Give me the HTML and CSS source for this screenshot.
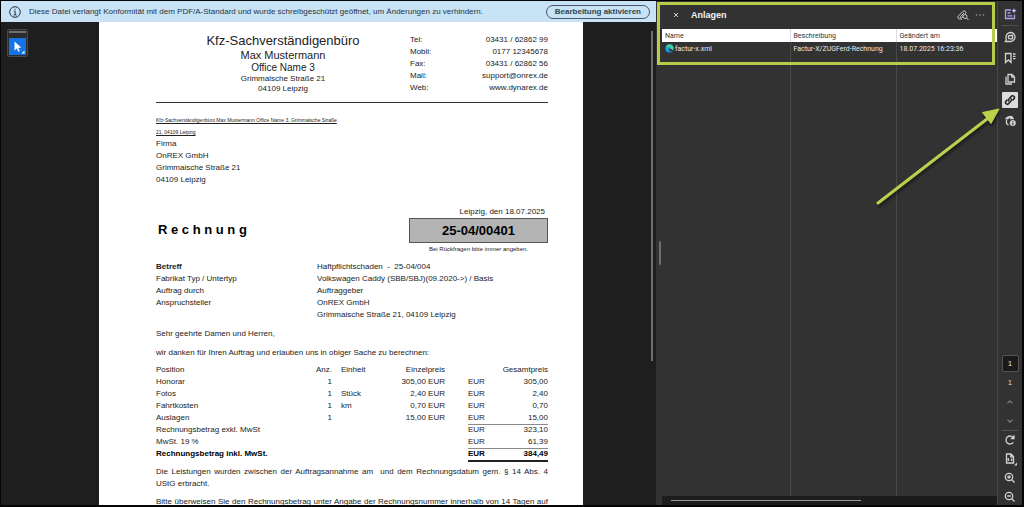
FILE: index.html
```html
<!DOCTYPE html>
<html lang="de">
<head>
    <meta charset="UTF-8">
    <meta name="viewport" content="width=device-width, initial-scale=1.0">
    <title>Rechnung 25-04/00401</title>
    <link rel="stylesheet" href="styles.css">
</head>
<body>

    <div class="app">
        <main class="viewer">
            <div class="banner">
                <svg class="info-icon" viewBox="0 0 12 12"><circle cx="6" cy="6" r="5.3"/><path d="M4.8 5.2h1.4v3.6M4.6 8.9h3M6 2.8v1.1"/></svg>
                <p>Diese Datei verlangt Konformität mit dem PDF/A-Standard und wurde schreibgeschützt geöffnet, um Änderungen zu verhindern.</p>
                <button class="enable-btn">Bearbeitung aktivieren</button>
            </div>

            <div class="document">
                <div class="tools">
                    <div class="palette">
                        <button class="tool-btn" aria-label="Auswählen">
                            <svg viewBox="0 0 17 17"><path d="M5.5 3.5v9l2.3-2 1.5 3.2 1.5-.7-1.5-3.1 2.9-.3z"/><path d="M15.5 12.5v3h-3z"/></svg>
                        </button>
                    </div>
                </div>

                <div class="stage">
                    <article class="page">
                        <header class="letterhead">
                            <div class="company">
                                <h1>Kfz-Sachverständigenbüro</h1>
                                <p class="owner">Max Mustermann</p>
                                <p class="office">Office Name 3</p>
                                <p class="street">Grimmaische Straße 21</p>
                                <p class="street">04109 Leipzig</p>
                            </div>
                            <dl class="contact">
                                <dt>Tel:</dt><dd>03431 / 62862 99</dd>
                                <dt>Mobil:</dt><dd>0177 12345678</dd>
                                <dt>Fax:</dt><dd>03431 / 62862 56</dd>
                                <dt>Mail:</dt><dd>support@onrex.de</dd>
                                <dt>Web:</dt><dd>www.dynarex.de</dd>
                            </dl>
                        </header>

                        <p class="sender">Kfz-Sachverständigenbüro Max Mustermann Office Name 3, Grimmaische Straße<br>21, 04109 Leipzig</p>
                        <address>Firma<br>OnREX GmbH<br>Grimmaische Straße 21<br>04109 Leipzig</address>

                        <section class="title-row">
                            <h2>R e c h n u n g</h2>
                            <div class="number-block">
                                <p class="date">Leipzig, den 18.07.2025</p>
                                <p class="number">25-04/00401</p>
                                <p class="hint">Bei Rückfragen bitte immer angeben.</p>
                            </div>
                        </section>

                        <dl class="subject">
                            <dt><b>Betreff</b></dt><dd>Haftpflichtschaden &nbsp;-&nbsp; 25-04/004</dd>
                            <dt>Fabrikat Typ / Untertyp</dt><dd>Volkswagen Caddy (SBB/SBJ)(09.2020-&gt;) / Basis</dd>
                            <dt>Auftrag durch</dt><dd>Auftraggeber</dd>
                            <dt>Anspruchsteller</dt><dd>OnREX GmbH<br>Grimmaische Straße 21, 04109 Leipzig</dd>
                        </dl>

                        <p class="text">Sehr geehrte Damen und Herren,</p>
                        <p class="text">wir danken für Ihren Auftrag und erlauben uns in obiger Sache zu berechnen:</p>

                        <table class="items">
                            <thead>
                                <tr><th class="col-pos">Position</th><th class="col-qty">Anz.</th><th class="col-unit">Einheit</th><th class="col-price">Einzelpreis</th><th class="col-gap"></th><th class="col-cur"></th><th class="col-total">Gesamtpreis</th></tr>
                            </thead>
                            <tbody>
                                <tr><td>Honorar</td><td class="num">1</td><td class="unit"></td><td class="num">305,00 EUR</td><td></td><td>EUR</td><td class="num">305,00</td></tr>
                                <tr><td>Fotos</td><td class="num">1</td><td class="unit">Stück</td><td class="num">2,40 EUR</td><td></td><td>EUR</td><td class="num">2,40</td></tr>
                                <tr><td>Fahrtkosten</td><td class="num">1</td><td class="unit">km</td><td class="num">0,70 EUR</td><td></td><td>EUR</td><td class="num">0,70</td></tr>
                                <tr><td>Auslagen</td><td class="num">1</td><td class="unit"></td><td class="num">15,00 EUR</td><td></td><td>EUR</td><td class="num">15,00</td></tr>
                            </tbody>
                            <tfoot>
                                <tr><td colspan="5">Rechnungsbetrag exkl. MwSt</td><td class="line">EUR</td><td class="num line">323,10</td></tr>
                                <tr><td colspan="5">MwSt. 19 %</td><td>EUR</td><td class="num">61,39</td></tr>
                                <tr class="sum"><td colspan="5">Rechnungsbetrag inkl. MwSt.</td><td class="line total">EUR</td><td class="num line total">384,49</td></tr>
                            </tfoot>
                        </table>

                        <p class="text justified">Die Leistungen wurden zwischen der Auftragsannahme am &nbsp;und dem Rechnungsdatum gem. § 14 Abs. 4 UStG erbracht.</p>
                        <p class="text full-line">Bitte überweisen Sie den Rechnungsbetrag unter Angabe der Rechnungsnummer innerhalb von 14 Tagen auf</p>
                    </article>
                    <div class="scroll-thumb"></div>
                </div>
            </div>
        </main>

        <aside class="panel">
            <div class="panel-head">
                <button class="icon-btn" aria-label="Schließen"><svg viewBox="0 0 12 12"><path d="M4 4l4 4M8 4l-4 4"/></svg></button>
                <h2>Anlagen</h2>
                <button class="icon-btn" aria-label="Anlagen durchsuchen"><svg viewBox="0 0 12 12"><path d="M5 10H2.800a1.800 1.800 0 0 1-1.200-3.200L5.800 2.500a1.700 1.700 0 0 1 2.600 2.200M7 4L3.500 7.600a.8.8 0 0 0 1.200 1.100L6 7.500"/><circle cx="8" cy="7.500" r="2"/><path d="M9.500 9l2 2"/></svg></button>
                <button class="icon-btn more" aria-label="Optionen"><svg viewBox="0 0 12 12"><circle cx="2.500" cy="6" r=".8"/><circle cx="6" cy="6" r=".8"/><circle cx="9.500" cy="6" r=".8"/></svg></button>
            </div>
            <div class="list">
                <table class="files">
                    <thead>
                        <tr><th class="col-name">Name</th><th class="col-desc">Beschreibung</th><th>Geändert am</th></tr>
                    </thead>
                    <tbody>
                        <tr>
                            <td class="file">
                                <svg class="edge" viewBox="0 0 10 10"><circle cx="5" cy="5" r="4.600" fill="#1379c9"/><path d="M.6 4.200C1 1.800 2.800.4 5 .4c2.700 0 4.600 2 4.600 4.200C9.600 6.200 8.400 7 7 7 5.800 7 5.900 6.200 6 5.500 6 3.800 3.500 2.400.6 4.200z" fill="#44d39c"/><path d="M.6 4.200C2 2.300 5 2.600 6 4.800 4 3.600 2.600 6 4.600 9.500 2 9.400.3 7 .6 4.200z" fill="#1aa5d8"/><path d="M6 5c-1.500.6-1 2.300.3 2.700 1 .3 2 0 2.600-.5" fill="#323232"/></svg>factur-x.xml
                            </td>
                            <td>Factur-X/ZUGFerd-Rechnung</td>
                            <td>18.07.2025 16:23:36</td>
                        </tr>
                        <tr class="rest"><td></td><td></td><td></td></tr>
                    </tbody>
                </table>
                <div class="hscroll"><div class="hthumb"></div></div>
            </div>
            <div class="splitter"></div>
            <div class="highlight"></div>
        </aside>

        <nav class="rail">
            <button class="rail-btn assistant" aria-label="KI-Assistent"><svg viewBox="0 0 16 16"><path d="M9 4H3.500v8.500h9V8.500M5.500 7h3M5.500 9.800h5"/><path d="M12 2l.8 2 2 .8-2 .8-.8 2-.8-2-2-.8 2-.8z" class="solid"/></svg></button>
            <hr>
            <button class="rail-btn" aria-label="Kommentare"><svg viewBox="0 0 16 16"><path d="M3.500 12.500h5a4.500 4.500 0 1 0-4.500-4.300c0 1.700.8 2.600-.5 4.300z"/><path d="M10.500 6.500H8a1.700 1.700 0 0 0 0 3.400h2.500z"/></svg></button>
            <button class="rail-btn" aria-label="Lesezeichen"><svg viewBox="0 0 16 16"><path d="M3.500 3.500H9v9L6.300 10l-2.800 2.500zM11 4h2.500M11 6.300h2.500M11 8.600h2.500"/></svg></button>
            <button class="rail-btn" aria-label="Seiten"><svg viewBox="0 0 16 16"><path d="M6 3.500h4l2.500 2.500v5H6zM9.800 3.700v2.500h2.500M4 5.500v7.500h6"/></svg></button>
            <button class="rail-btn active" aria-label="Anlagen"><svg viewBox="0 0 16 16"><path d="M7 9.500a2 2 0 0 1 0-2.500l2.200-2.600a1.800 1.800 0 0 1 2.800 2.400l-1.500 1.700M9 6.500A2 2 0 0 1 9 9l-2.200 2.600A1.800 1.800 0 0 1 4 9.200l1.500-1.700"/></svg></button>
            <button class="rail-btn" aria-label="Konformität"><svg viewBox="0 0 16 16"><path d="M3 6.200a5 4 0 0 1 8-2.500l1 2.500H8V4.500L6 6.500z" class="solid"/><path d="M4.500 7v3.500l2 1.800"/><circle cx="10.800" cy="10" r="3" class="solid"/><path d="M10.800 8.300v.8M10.800 9.700v2" class="cut"/></svg></button>

            <div class="rail-bottom">
                <input class="page-input" type="text" value="1" aria-label="Seite">
                <span class="page-count">1</span>
                <button class="rail-btn dim" aria-label="Vorherige Seite"><svg viewBox="0 0 16 16"><path d="M5.500 9.300L8 7l2.500 2.300"/></svg></button>
                <button class="rail-btn dim" aria-label="Nächste Seite"><svg viewBox="0 0 16 16"><path d="M5.500 6.700L8 9l2.500-2.300"/></svg></button>
                <hr>
                <button class="rail-btn" aria-label="Drehen"><svg viewBox="0 0 16 16"><path d="M11.300 10.300a4 4 0 1 1 0-4.600M12 3.200v3.300H8.800"/></svg></button>
                <button class="rail-btn" aria-label="Seitenansicht"><svg viewBox="0 0 16 16"><path d="M4.500 3h4.500l2.500 2.500V12h-7zM8.800 3v2.800h2.700M6.300 7v3M9.700 7.500V10M8 8v.2M8 9.600v.2"/><path d="M15 11.500v3h-3z" class="solid"/></svg></button>
                <button class="rail-btn" aria-label="Vergrößern"><svg viewBox="0 0 16 16"><circle cx="7" cy="7" r="3.700"/><path d="M9.800 9.800l2.700 2.700M5.200 7h3.600M7 5.200v3.600"/></svg></button>
                <button class="rail-btn" aria-label="Verkleinern"><svg viewBox="0 0 16 16"><circle cx="7" cy="7" r="3.700"/><path d="M9.800 9.800l2.700 2.700M5.200 7h3.600"/></svg></button>
            </div>
        </nav>

        <svg class="arrow" viewBox="0 0 126 100"><path d="M3 97L112 13" stroke="#bdd04c" stroke-width="3" stroke-linecap="round"/><path d="M124 3l-8 14.500-8.500-11z" fill="#bdd04c" stroke="#bdd04c" stroke-width="1"/></svg>
    </div>

</body>
</html>
```
FILE: styles.css
```css
* {
    margin: 0;
    padding: 0;
    box-sizing: border-box;
}

body {
    font-family: "Liberation Sans", Arial, sans-serif;
    font-size: 8px;
    line-height: 12px;
    color: #222;
    background-color: #000;
}

button {
    border: none;
    background: none;
    font-family: inherit;
    cursor: pointer;
}

svg {
    display: block;
    fill: none;
}

.app {
    position: relative;
    display: flex;
    height: 100vh;
    border: solid #050505;
    border-width: 1px 2px 2px 1px;
    overflow: hidden;
}

/* Dokumentansicht */
.viewer {
    flex: 1;
    min-width: 0;
    display: flex;
    flex-direction: column;
    background-color: #1e1e1e;
}

.banner {
    flex: none;
    display: flex;
    align-items: center;
    height: 21px;
    padding: 0 6px 0 8px;
    gap: 8px;
    background-color: #c8e2f6;
    color: #27343f;
}

.info-icon {
    width: 12px;
    height: 12px;
    stroke: #27343f;
}

.banner p {
    flex: 1;
    white-space: nowrap;
}

.enable-btn {
    height: 14px;
    padding: 0 8px;
    border: 1px solid #44586a;
    border-radius: 7px;
    color: #33424f;
    font-size: 8px;
    font-weight: bold;
    line-height: 12px;
}

.document {
    flex: 1;
    min-height: 0;
    display: flex;
}

.tools {
    width: 25px;
    padding: 7px 0 0 6px;
}

.palette {
    width: 21px;
    padding: 8px 1px 1px;
    border: 1px solid #484848;
    border-radius: 2px;
    background: linear-gradient(#707070, #707070) 50% 1px / 17px 2px no-repeat #2c2c2c;
}

.tool-btn {
    display: block;
    width: 17px;
    height: 17px;
    background-color: #1473e6;
}

.tool-btn path {
    fill: #fff;
}

.stage {
    position: relative;
    flex: 1;
    display: flex;
    justify-content: center;
    overflow: hidden;
}

.scroll-thumb {
    position: absolute;
    top: 9px;
    right: 3px;
    width: 2px;
    height: 330px;
    background-color: #6e6e6e;
}

/* Rechnung */
.page {
    width: 484px;
    min-height: 100%;
    padding: 11px 35px 0 57px;
    background-color: #fff;
}

.letterhead {
    display: flex;
    justify-content: space-between;
    height: 70px;
    border-bottom: 1px solid #333;
}

.company {
    width: 254px;
    text-align: center;
}

.company h1 {
    font-size: 13px;
    font-weight: normal;
    line-height: 16px;
}

.owner {
    font-size: 11px;
    line-height: 13px;
}

.office {
    font-size: 10px;
    line-height: 12px;
}

.street {
    line-height: 10px;
}

.contact {
    display: grid;
    grid-template-columns: auto auto;
    justify-content: space-between;
    align-content: start;
    width: 138px;
    padding-top: 1px;
}

.contact dd {
    text-align: right;
}

.sender {
    margin-top: 11px;
    font-size: 5px;
    text-decoration: underline;
}

address {
    font-style: normal;
}

.title-row {
    display: flex;
    justify-content: space-between;
    margin-top: 20px;
}

.title-row h2 {
    padding: 16px 0 0 2px;
    font-size: 13px;
    line-height: 16px;
    color: #000;
}

.number-block {
    width: 139px;
}

.date {
    padding-right: 3px;
    text-align: right;
}

.number {
    border: 1px solid #555;
    background-color: #b4b4b4;
    color: #000;
    font-size: 13px;
    font-weight: bold;
    line-height: 23px;
    text-align: center;
}

.hint {
    font-size: 6px;
    text-align: center;
}

.subject {
    display: grid;
    grid-template-columns: 161px 1fr;
    margin-top: 6px;
}

.text {
    margin-top: 7px;
}

.items {
    width: 100%;
    margin-top: 5px;
    border-collapse: collapse;
    table-layout: fixed;
}

.items th {
    font-weight: normal;
    text-align: left;
}

.items .col-qty,
.items .col-price,
.items .col-total,
.items .num {
    text-align: right;
}

.col-pos {
    width: 150px;
}

.col-qty {
    width: 26px;
}

.col-unit {
    width: 50px;
}

.items .col-unit,
.items .unit {
    padding-left: 9px;
}

.col-price {
    width: 63px;
}

.col-gap {
    width: 23px;
}

.col-cur {
    width: 30px;
}

.line {
    box-shadow: inset 0 1px #8a8a8a;
}

.sum {
    font-weight: bold;
    color: #000;
}

.total {
    box-shadow: inset 0 1px #8a8a8a, 0 2px #222;
}

.justified,
.full-line {
    margin-top: 6px;
    text-align: justify;
}

.full-line {
    text-align-last: justify;
}

/* Anlagen */
.panel {
    position: relative;
    width: 341px;
    display: flex;
    flex-direction: column;
    background-color: #323232;
    color: #e8e8e8;
}

.panel-head {
    display: flex;
    align-items: center;
    height: 28px;
    padding: 0 11px 0 14px;
    gap: 5px;
}

.panel-head h2 {
    flex: 1;
    padding-left: 4px;
    font-size: 9px;
    color: #f4f4f4;
}

.icon-btn {
    width: 12px;
    height: 12px;
    stroke: #d0d0d0;
}

.more svg {
    stroke: none;
    fill: #a0a0a0;
}

.list {
    flex: 1;
    display: flex;
    flex-direction: column;
    padding-left: 6px;
}

.files {
    flex: 1;
    width: 100%;
    border-collapse: collapse;
    table-layout: fixed;
    font-family: Roboto, "Liberation Sans", sans-serif;
    font-size: 7px;
}

.files thead {
    background-color: #fff;
    color: #333;
}

.files th {
    height: 13px;
    font-weight: normal;
    text-align: left;
}

.files th,
.files td {
    padding-left: 3px;
}

.files td {
    height: 13px;
}

.files td + td {
    border-left: 1px solid #484848;
}

.files th + th {
    border-left: 1px solid #ddd;
}

.files .rest td {
    height: auto;
}

.col-name {
    width: 128px;
}

.col-desc {
    width: 106px;
}

.file .edge {
    display: inline-block;
    width: 9px;
    height: 9px;
    margin-right: 1px;
    vertical-align: middle;
}

.hscroll {
    height: 9px;
    padding: 4px 9px;
    background-color: #1c1c1c;
}

.hthumb {
    width: 60%;
    height: 1px;
    background-color: #9a9a9a;
}

.splitter {
    position: absolute;
    top: 240px;
    left: 3px;
    width: 2px;
    height: 24px;
    border-radius: 1px;
    background-color: #6e6e6e;
}

.highlight {
    position: absolute;
    top: 1px;
    left: 1px;
    right: 2px;
    height: 63px;
    border: 3px solid #b8cb4b;
}

/* Werkzeugleiste rechts */
.rail {
    width: 25px;
    display: flex;
    flex-direction: column;
    align-items: center;
    gap: 5px;
    padding: 5px 0 0;
    border-left: 1px solid #464646;
    background-color: #323232;
}

.rail hr {
    width: 16px;
    margin: -2px 0;
    border: none;
    border-top: 1px solid #505050;
}

.rail-btn {
    flex: none;
    width: 16px;
    height: 16px;
    border-radius: 1px;
    stroke: #d2d2d2;
    stroke-width: 1.3px;
}

.rail-btn .solid {
    fill: #d2d2d2;
    stroke: none;
}

.rail-btn .cut {
    stroke: #323232;
}

.assistant {
    stroke: #a9a6e8;
}

.assistant .solid {
    fill: #c6c4ff;
}

.active {
    background-color: #dcdcdc;
    stroke: #222;
}

.active path {
    stroke-width: 1.5px;
}

.dim {
    stroke: #777;
}

.rail-bottom {
    display: flex;
    flex-direction: column;
    align-items: center;
    gap: 3px;
    margin-top: auto;
}

.page-input {
    width: 17px;
    height: 17px;
    border: 1px solid #555;
    border-radius: 2px;
    background-color: #1a1a1a;
    color: #e0e0e0;
    font: 8px/12px "Liberation Sans", sans-serif;
    text-align: center;
}

.page-count {
    padding: 2px 0;
    color: #d0d0d0;
}

/* Hinweispfeil auf die Büroklammer */
.arrow {
    position: absolute;
    top: 105px;
    right: 21px;
    width: 126px;
    height: 100px;
    filter: drop-shadow(1px 3px 1px rgba(0, 0, 0, 0.4));
}
```
